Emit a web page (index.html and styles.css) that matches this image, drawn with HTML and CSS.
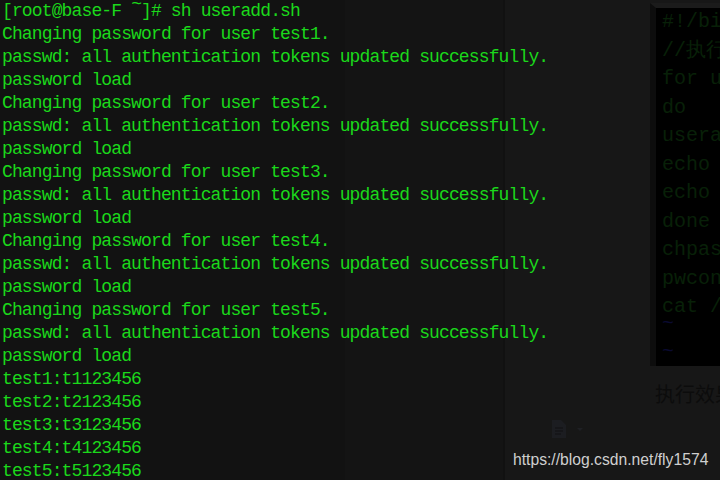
FILE: index.html
```html
<!DOCTYPE html>
<html>
<head>
<meta charset="utf-8">
<link rel="stylesheet" href="styles.css">
</head>
<body>
<div class="page">
  <pre class="term">[root@base-F <span class="hi">~</span>]# sh useradd.sh
Changing password for user test1.
passwd: all authentication tokens updated successfully.
password load
Changing password for user test2.
passwd: all authentication tokens updated successfully.
password load
Changing password for user test3.
passwd: all authentication tokens updated successfully.
password load
Changing password for user test4.
passwd: all authentication tokens updated successfully.
password load
Changing password for user test5.
passwd: all authentication tokens updated successfully.
password load
test1:t1123456
test2:t2123456
test3:t3123456
test4:t4123456
test5:t5123456</pre>
  <div class="side">
    <div class="code-wrap">
      <pre class="code">#!/bin/bash
//执行完后显示用户名和密码
for u in `seq 1 5`
do
useradd test$u
echo "test$u:t${u}123456" &gt;&gt; /tmp/pass
echo "password load"
done
chpasswd &lt; /tmp/pass
pwconv
cat /tmp/pass
<span class="tilde">~</span>
<span class="tilde">~</span></pre>
    </div>
    <p class="heading">执行效果</p>
    <div class="tools">
      <svg class="doc" width="18" height="20" viewBox="0 0 18 20">
        <path d="M2 1h9l5 5v13H2z" fill="#1c1d21"/>
        <path d="M5 9h8M5 12h8M5 15h6" stroke="#141517" stroke-width="1.5"/>
      </svg>
      <span class="caret"></span>
    </div>
  </div>
  <div class="watermark">https://blog.csdn.net/fly1574</div>
</div>
</body>
</html>
```
FILE: styles.css
```css
html, body {
  margin: 0;
  padding: 0;
  background: #171717;
}
.page {
  position: relative;
  width: 720px;
  height: 480px;
  display: flex;
  overflow: hidden;
}
.term {
  margin: 0;
  width: 505px;
  flex: none;
  padding: 0 0 0 2px;
  box-sizing: border-box;
  background: linear-gradient(to right, #121212 0, #121212 345px, #141414 345px, #141414 100%);
  border-right: 2px solid #111111;
  color: #1bd81b;
  font-family: "Liberation Mono", monospace;
  font-size: 18px;
  letter-spacing: -0.87px;
  line-height: 23px;
  white-space: pre;
}
.term .hi {
  display: inline-block;
  transform: translateY(-7px);
}
.side {
  flex: 1;
  display: flex;
  flex-direction: column;
  padding-left: 145px;
  min-width: 0;
}
.code-wrap {
  margin-top: 3px;
  height: 363px;
  border-top: 5px solid #1b1b1b;
  border-left: 6px solid #0d0d0d;
  background: #000;
  overflow: hidden;
  box-sizing: border-box;
}
.code {
  margin: 0;
  padding: 0 0 0 6px;
  color: #082008;
  font-family: "Liberation Mono", monospace;
  font-size: 20px;
  line-height: 28.5px;
  white-space: pre;
}
.code .tilde {
  color: #0a0a30;
  display: inline-block;
  transform: translateY(-12px);
}
.heading {
  margin: 15px 0 0 5px;
  color: #0c0c0c;
  font-family: "Noto Sans CJK SC", sans-serif;
  font-size: 20px;
  line-height: 26px;
  white-space: nowrap;
}
.tools {
  display: flex;
  align-items: center;
  gap: 9px;
  margin: 12px 0 0 -100px;
}
.caret {
  width: 0;
  height: 0;
  border-left: 3px solid transparent;
  border-right: 3px solid transparent;
  border-top: 3px solid #1f2024;
}
.watermark {
  position: absolute;
  left: 513px;
  top: 450px;
  color: #cfcfcf;
  font-family: "Liberation Sans", Arial, sans-serif;
  font-size: 15.7px;
  line-height: 20px;
  white-space: nowrap;
}
```
